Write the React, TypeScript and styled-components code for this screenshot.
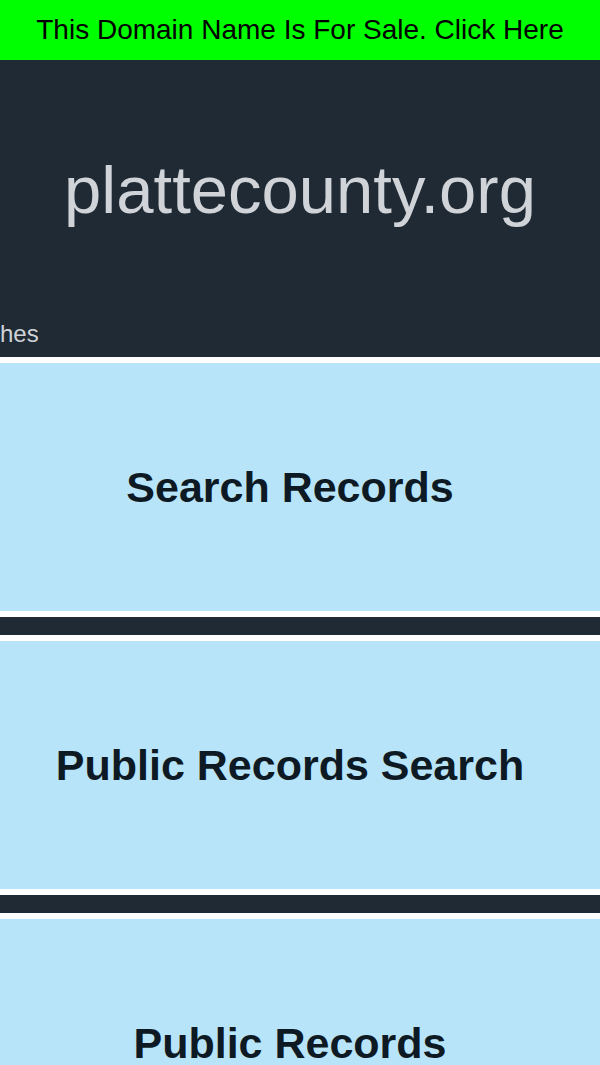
import React from "react";
import styled, { createGlobalStyle } from "styled-components";

const GlobalStyle = createGlobalStyle`
  html, body {
    margin: 0;
    padding: 0;
    background: #1f2a35;
  }
  body {
    font-family: "Liberation Sans", Arial, sans-serif;
  }
`;

const SRoot = styled.div`
  width: 600px;
  overflow: hidden;
  background: #1f2a35;
`;

const SSaleBar = styled.a`
  display: flex;
  align-items: center;
  justify-content: center;
  height: 60px;
  background: #00ff00;
  color: #000;
  font-size: 28px;
  text-decoration: none;
`;

const SHeader = styled.header`
  display: flex;
  flex-direction: column;
  padding: 96px 0 11px;
`;

const STitle = styled.h1`
  margin: 0;
  font-size: 67px;
  line-height: 1;
  font-weight: 400;
  color: #d0d3d7;
  text-align: center;
`;

const STicker = styled.div`
  margin-top: 99px;
  font-size: 24px;
  line-height: 1;
  color: #d0d3d7;
  white-space: nowrap;
`;

const SList = styled.div`
  display: flex;
  flex-direction: column;
  gap: 18px;
`;

const SCard = styled.a`
  display: flex;
  align-items: center;
  justify-content: center;
  height: 248px;
  padding-right: 20px;
  background: #b8e4fa;
  border-top: 6px solid #fff;
  border-bottom: 6px solid #fff;
  color: #0d1a24;
  font-size: 43px;
  line-height: 1;
  font-weight: 700;
  text-decoration: none;
  text-align: center;
`;

const links = ["Search Records", "Public Records Search", "Public Records"];

const App = () => {
  return (
    <SRoot>
      <GlobalStyle />
      <SSaleBar href="#">This Domain Name Is For Sale. Click Here</SSaleBar>
      <SHeader>
        <STitle>plattecounty.org</STitle>
        <STicker>hes</STicker>
      </SHeader>
      <SList>
        {links.map((label) => (
          <SCard key={label} href="#">
            {label}
          </SCard>
        ))}
      </SList>
    </SRoot>
  );
};

export default App;
